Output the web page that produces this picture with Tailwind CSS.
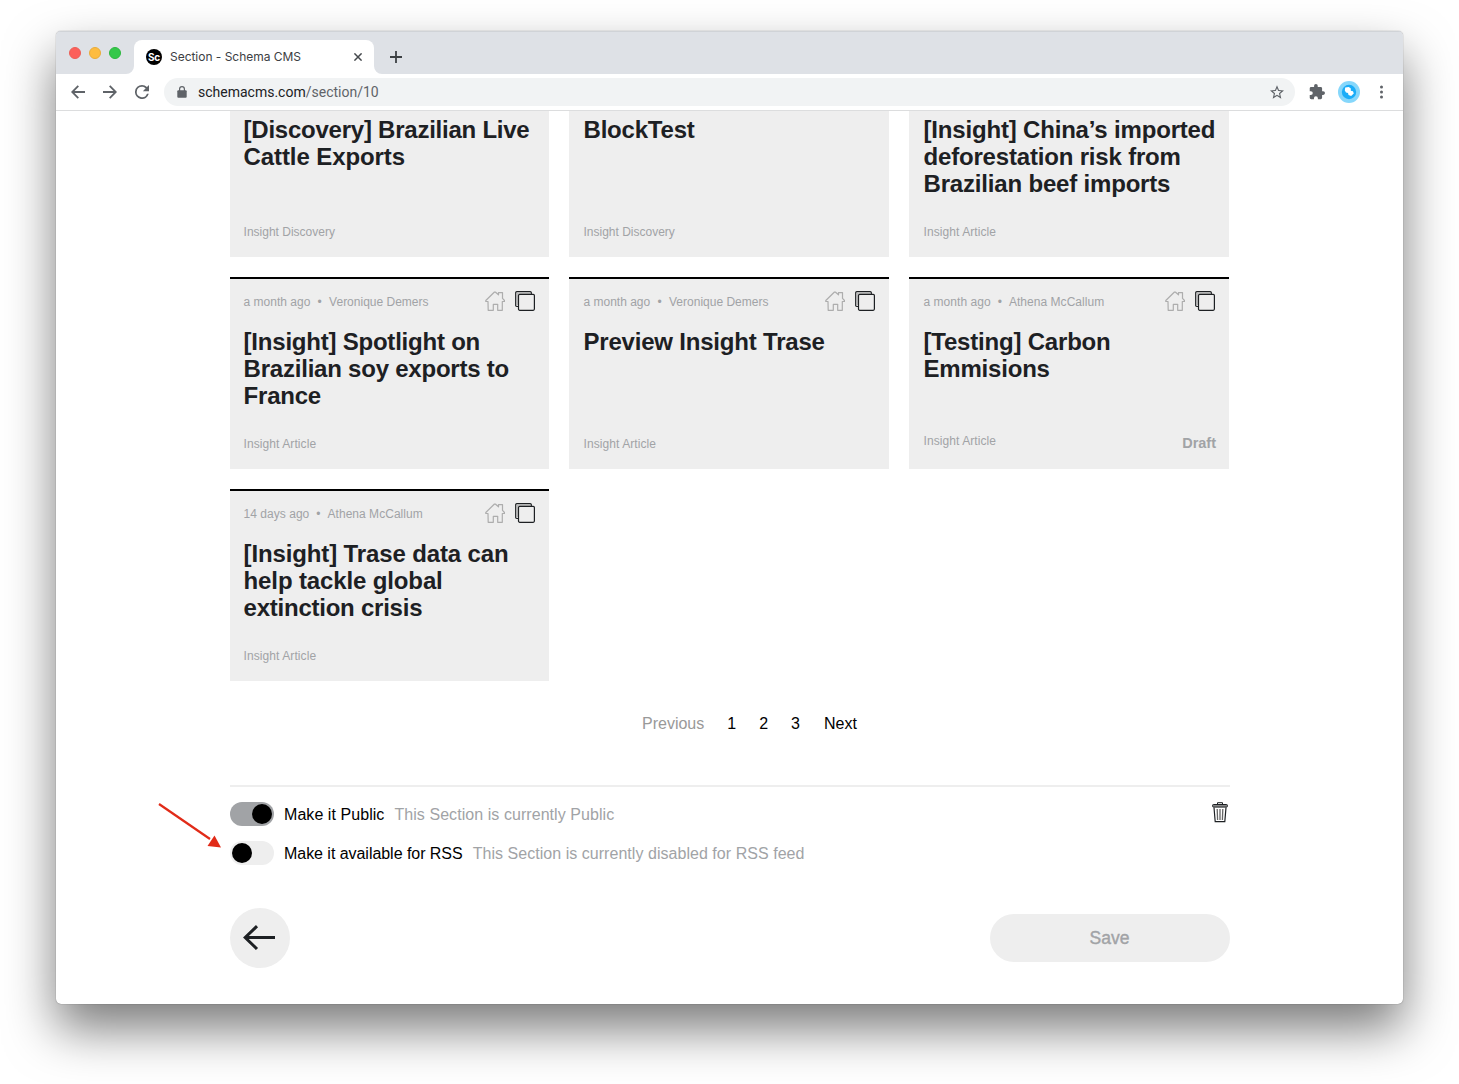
<!DOCTYPE html>
<html lang="en">
<head>
<meta charset="utf-8">
<title>Section - Schema CMS</title>
<script src="https://cdn.jsdelivr.net/npm/@tailwindcss/browser@4"></script>
</head>
<body class="h-[1084px] overflow-hidden bg-white pt-[31px] pl-14 font-['Liberation_Sans',Arial,sans-serif]">
<svg class="hidden">
  <symbol id="home" viewBox="0 0 20 20"><path d="M3 10.500H.8v-1L9.200 1.200h1.400l2.900 2.600V1.600h4v5.800l2 2.100v1H17.300v8.800h-4.600v-6h-4.400v6H3.200z" fill="none" stroke="#adadad" stroke-width="1.200" stroke-linejoin="round"/></symbol>
  <symbol id="copy" viewBox="0 0 20 20"><path d="M3 15.500H1.800a1.100 1.100 0 0 1-1.100-1.100V1.800A1.100 1.100 0 0 1 1.800.7h13.400a1.100 1.100 0 0 1 1.100 1.100V3" fill="none" stroke="#1d2023" stroke-width="1.200"/><path d="M2.200 14V2.200H15" fill="none" stroke="#aaa" stroke-width="1"/><rect x="3.500" y="3.300" width="15.900" height="16" rx="1.200" fill="#eee" stroke="#1d2023" stroke-width="1.200"/></symbol>
</svg>
<div class="flex h-[973px] w-[1347px] flex-col overflow-hidden rounded-[5px] bg-white shadow-[0_0_1px_rgba(0,0,0,0.6),0_25px_50px_rgba(0,0,0,0.52)]">
  <header class="shrink-0">
    <div class="flex h-[43px] items-end border-t border-[#d0d3d7] bg-[#dee1e6]">
      <div class="flex gap-2 self-center pl-[13px]">
        <span class="size-3 rounded-full border border-[#ec5f57] bg-[#fc605b]"></span>
        <span class="size-3 rounded-full border border-[#e9ac3a] bg-[#fdbc40]"></span>
        <span class="size-3 rounded-full border border-[#2cb73f] bg-[#34c84a]"></span>
      </div>
      <svg class="ml-[5px] h-2 w-2" viewBox="0 0 8 8"><path d="M8 0v8H0a8 8 0 0 0 8-8" fill="#fff"/></svg>
      <div class="flex h-[34px] w-60 items-center rounded-t-lg bg-white pl-3">
        <span class="flex size-4 items-center justify-center rounded-full bg-black font-['Inter',sans-serif] text-[10px] font-bold tracking-[-0.3px] text-white">Sc</span>
        <span class="ml-2 font-['Inter',sans-serif] text-xs tracking-[-0.03px] text-[#3c4043]">Section - Schema CMS</span>
        <svg class="mr-3 ml-auto size-2" viewBox="0 0 8 8"><path d="M.4.4l7.200 7.200M7.600.4L.4 7.600" stroke="#45494d" stroke-width="1.500"/></svg>
      </div>
      <svg class="h-2 w-2" viewBox="0 0 8 8"><path d="M0 0v8h8a8 8 0 0 1-8-8" fill="#fff"/></svg>
      <svg class="mb-[11px] ml-2 size-3" viewBox="0 0 12 12"><path d="M6 0v12M0 6h12" stroke="#3c4043" stroke-width="1.800"/></svg>
    </div>
    <div class="flex h-[37px] items-center border-b border-[#dcddde] bg-white pl-[15px] text-[#5f6368]">
      <svg class="size-[14px]" viewBox="0 0 14 14" fill="none" stroke="currentColor" stroke-width="1.800"><path d="M14 7H1.500M7.300.8L1.200 7l6.100 6.200"/></svg>
      <svg class="ml-[18px] size-[14px]" viewBox="0 0 14 14" fill="none" stroke="currentColor" stroke-width="1.800"><path d="M0 7h12.500M6.700.8L12.800 7l-6.100 6.200"/></svg>
      <svg class="ml-[18px] size-[14px]" viewBox="4 4 16 16" fill="currentColor"><path d="M17.650 6.350A7.960 7.960 0 0 0 12 4a8 8 0 1 0 7.730 10h-2.080A6 6 0 1 1 12 6c1.660 0 3.140.69 4.220 1.780L13 11h7V4z"/></svg>
      <div class="ml-[15px] flex h-7 w-[1131px] items-center rounded-full bg-[#f1f3f4] pl-[13px]">
        <svg class="h-[12px] w-[10px]" viewBox="0 0 10 12"><rect x=".3" y="4.200" width="9.400" height="7.600" rx="1" fill="#5f6368"/><path d="M2.600 5V3a2.400 2.400 0 0 1 4.800 0v2" fill="none" stroke="#5f6368" stroke-width="1.200"/></svg>
        <span class="ml-[11px] font-['Roboto',sans-serif] text-sm text-[#5f6368]"><span class="text-[#202124]">schemacms.com</span>/section/10</span>
        <svg class="mr-[11px] ml-auto size-[14px]" viewBox="2 2 20 19" fill="#5f6368"><path d="M22 9.240l-7.190-.62L12 2 9.190 8.630 2 9.240l5.460 4.730L5.820 21 12 17.270 18.180 21l-1.630-7.030zM12 15.400l-3.760 2.270 1-4.280-3.320-2.880 4.380-.38L12 6.100l1.710 4.040 4.380.38-3.320 2.880 1 4.280z"/></svg>
      </div>
      <svg class="ml-[14px] size-4" viewBox="1 1 22 22" fill="currentColor"><path d="M20.500 11H19V7a2 2 0 0 0-2-2h-4V3.500a2.500 2.500 0 0 0-5 0V5H4a2 2 0 0 0-2 2v3.800h1.500a2.700 2.700 0 0 1 0 5.400H2V20a2 2 0 0 0 2 2h3.800v-1.500a2.700 2.700 0 0 1 5.400 0V22H17a2 2 0 0 0 2-2v-4h1.500a2.500 2.500 0 0 0 0-5z"/></svg>
      <svg class="ml-[13px] size-[22px]" viewBox="0 0 22 22"><circle cx="11" cy="11" r="11" fill="#86d7fb"/><circle cx="11" cy="11" r="7.200" fill="#1badf8"/><path d="M7.200 6.600l3.600-.6 2 1.600v2.200l2.200.4.800 2.300-2.700 2.400-2.600-.9-.5-2-2-.6-1.200-2z" fill="#fff"/></svg>
      <svg class="ml-5 h-[14px] w-[3px]" viewBox="0 0 3 14" fill="currentColor"><circle cx="1.500" cy="2" r="1.500"/><circle cx="1.500" cy="7" r="1.500"/><circle cx="1.500" cy="12" r="1.500"/></svg>
    </div>
  </header>

  <main class="min-h-0 flex-1 overflow-hidden pl-[174px]">
    <section class="-mt-[46px] grid w-[999px] grid-cols-[319px_320px_320px] gap-5 text-xs text-[#a1a3a6]">
      <article class="flex h-48 flex-col border-t-2 border-black bg-[#eee] px-[13.600px] pt-3 pb-[15px]">
        <div class="h-5"></div>
        <h2 class="mt-[17px] text-2xl leading-[27px] font-bold tracking-[-0.24px] text-[#1d2023]">[Discovery] Brazilian Live<br><span class="tracking-[-0.1px]">Cattle Exports</span></h2>
        <p class="mt-auto leading-5">Insight Discovery</p>
      </article>
      <article class="flex h-48 flex-col border-t-2 border-black bg-[#eee] pr-[14px] pl-[14.500px] pt-3 pb-[15px]">
        <div class="h-5"></div>
        <h2 class="mt-[17px] text-2xl leading-[27px] font-bold tracking-[-0.2px] text-[#1d2023]">BlockTest</h2>
        <p class="mt-auto leading-5">Insight Discovery</p>
      </article>
      <article class="flex h-48 flex-col border-t-2 border-black bg-[#eee] pr-[14px] pl-[14.500px] pt-3 pb-[15px]">
        <div class="h-5"></div>
        <h2 class="mt-[17px] text-2xl leading-[27px] font-bold tracking-[-0.18px] whitespace-nowrap text-[#1d2023]">[Insight] China’s imported<br>deforestation risk from<br>Brazilian beef imports</h2>
        <p class="mt-auto leading-5 tracking-[0.08px]">Insight Article</p>
      </article>

      <article class="flex h-48 flex-col border-t-2 border-black bg-[#eee] px-[13.600px] pt-3 pb-[15px]">
        <div class="flex h-5 items-center"><span class="pt-0.5">a month ago</span><span class="mx-[7.300px] pt-0.5">•</span><span class="pt-0.5">Veronique Demers</span><svg class="ml-auto size-5"><use href="#home"/></svg><svg class="ml-[10px] size-5"><use href="#copy"/></svg></div>
        <h2 class="mt-[17px] text-2xl leading-[27px] font-bold tracking-[-0.22px] text-[#1d2023]">[Insight] Spotlight on<br>Brazilian soy exports to<br>France</h2>
        <p class="mt-auto leading-5 tracking-[0.08px]">Insight Article</p>
      </article>
      <article class="flex h-48 flex-col border-t-2 border-black bg-[#eee] pr-[14px] pl-[14.500px] pt-3 pb-[15px]">
        <div class="flex h-5 items-center"><span class="pt-0.5">a month ago</span><span class="mx-[7.300px] pt-0.5">•</span><span class="pt-0.5">Veronique Demers</span><svg class="ml-auto size-5"><use href="#home"/></svg><svg class="ml-[10px] size-5"><use href="#copy"/></svg></div>
        <h2 class="mt-[17px] text-2xl leading-[27px] font-bold tracking-[-0.2px] text-[#1d2023]">Preview Insight Trase</h2>
        <p class="mt-auto leading-5 tracking-[0.08px]">Insight Article</p>
      </article>
      <article class="flex h-48 flex-col border-t-2 border-black bg-[#eee] pr-[14px] pl-[14.500px] pt-3 pb-4">
        <div class="flex h-5 items-center tracking-[0.04px]"><span class="pt-0.5">a month ago</span><span class="mx-[7px] pt-0.5">•</span><span class="pt-0.5">Athena McCallum</span><svg class="ml-auto size-5"><use href="#home"/></svg><svg class="ml-[10px] size-5"><use href="#copy"/></svg></div>
        <h2 class="mt-[17px] text-2xl leading-[27px] font-bold tracking-[-0.2px] text-[#1d2023]">[Testing] Carbon<br>Emmisions</h2>
        <div class="mt-auto flex h-5 justify-between leading-5"><p class="-mt-0.5 tracking-[0.08px]">Insight Article</p><strong class="-mr-px text-[14.500px]">Draft</strong></div>
      </article>

      <article class="flex h-48 flex-col border-t-2 border-black bg-[#eee] px-[13.600px] pt-3 pb-[15px]">
        <div class="flex h-5 items-center tracking-[0.03px]"><span class="pt-0.5">14 days ago</span><span class="mx-[7px] pt-0.5">•</span><span class="pt-0.5">Athena McCallum</span><svg class="ml-auto size-5"><use href="#home"/></svg><svg class="ml-[10px] size-5"><use href="#copy"/></svg></div>
        <h2 class="mt-[17px] text-2xl leading-[27px] font-bold tracking-[-0.13px] text-[#1d2023]">[Insight] Trase data can<br>help tackle global<br><span class="tracking-[-0.24px]">extinction crisis</span></h2>
        <p class="mt-auto leading-5 tracking-[0.08px]">Insight Article</p>
      </article>
    </section>

    <nav class="mt-[33px] flex gap-[23px] pl-[412px] text-base leading-5 text-black">
      <span class="text-[#999]">Previous</span><span>1</span><span>2</span><span>3</span><span class="pl-px">Next</span>
    </nav>

    <section class="mt-[51px] flex w-[1000px] justify-between border-t-2 border-[#eee] pt-[15px]">
      <div class="flex flex-col gap-[15px] text-base text-black">
        <div class="flex h-6 items-center">
          <span class="flex h-6 w-11 items-center justify-end rounded-full bg-[#a1a3a6] pr-0.5"><span class="size-5 rounded-full bg-black"></span></span>
          <span class="ml-[10px] pt-0.5 tracking-[0.06px]">Make it Public</span><span class="ml-[10px] pt-0.5 tracking-[0.06px] text-[#a1a3a6]">This Section is currently Public</span>
        </div>
        <div class="flex h-6 items-center">
          <span class="flex h-6 w-11 items-center rounded-full bg-[#eee] pl-0.5"><span class="size-5 rounded-full bg-black"></span></span>
          <span class="ml-[10px] pt-0.5 tracking-[-0.04px]">Make it available for RSS</span><span class="ml-[10px] pt-0.5 tracking-[0.04px] text-[#a1a3a6]">This Section is currently disabled for RSS feed</span>
        </div>
      </div>
      <svg class="mr-[2px] h-[21px] w-4" viewBox="0 0 16 21" fill="none" stroke="#1d2023"><path d="M5.500 2.200V.7h5v1.500"/><rect x=".6" y="2.500" width="14.800" height="2.600" rx=".8" fill="#888"/><path d="M2 5.500l1.200 14.200h9.600L14 5.500" stroke-width="1.200"/><path d="M5.200 7l.4 11M8 7v11M10.800 7l-.4 11" stroke="#666" stroke-width="1.300"/></svg>
    </section>

    <footer class="mt-[43px] flex w-[1000px] items-center justify-between">
      <button class="flex size-[60px] items-center justify-center rounded-full bg-[#eee] pr-0.5"><svg class="h-[26px] w-8" viewBox="0 0 32 26" fill="none" stroke="#1d2023" stroke-width="3"><path d="M32 12.500H2M14 1.200L2.200 12.500 14 24"/></svg></button>
      <button class="h-12 w-60 rounded-full bg-[#eee] pr-px text-[17.500px] text-[#a1a3a6] [-webkit-text-stroke:0.4px_#a1a3a6]">Save</button>
    </footer>
  </main>
</div>
<svg class="absolute top-[800px] left-[155px] h-[50px] w-[68px]" viewBox="0 0 68 50"><path d="M4 4l51 35" stroke="#e12b18" stroke-width="2.200"/><path d="M66 47.500L52.500 46l7-10.500z" fill="#e12b18"/></svg>
</body>
</html>
